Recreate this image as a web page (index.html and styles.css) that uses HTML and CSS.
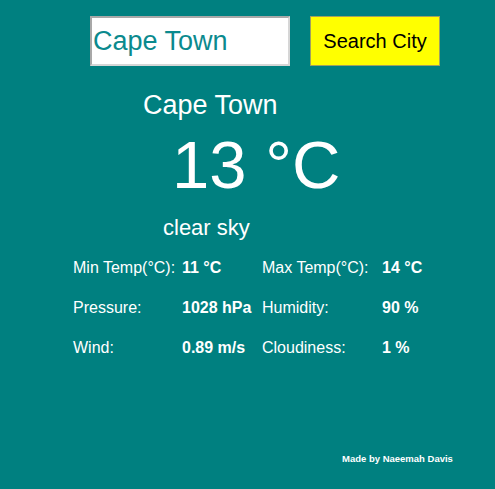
FILE: index.html
```html
<!DOCTYPE html>
<html>
<head>
<meta charset="utf-8">
<link rel="stylesheet" href="styles.css">
</head>
<body>
<div class="app">
  <form class="search">
    <input class="city-input" type="text" value="Cape Town">
    <button class="search-btn" type="button">Search City</button>
  </form>
  <h1 class="city">Cape Town</h1>
  <div class="temp">13 °C</div>
  <div class="desc">clear sky</div>
  <div class="details">
    <span class="label">Min Temp(°C):</span><span class="value">11 °C</span>
    <span class="label">Max Temp(°C):</span><span class="value">14 °C</span>
    <span class="label">Pressure:</span><span class="value">1028 hPa</span>
    <span class="label">Humidity:</span><span class="value">90 %</span>
    <span class="label">Wind:</span><span class="value">0.89 m/s</span>
    <span class="label">Cloudiness:</span><span class="value">1 %</span>
  </div>
  <footer class="footer">Made by Naeemah Davis</footer>
</div>
</body>
</html>
```
FILE: styles.css
```css
html, body {
  margin: 0;
  padding: 0;
  background: #008080;
  font-family: "Liberation Sans", Arial, sans-serif;
  color: #ffffff;
}
.app {
  display: flex;
  flex-direction: column;
  align-items: flex-start;
  padding-top: 16px;
  height: 489px;
  box-sizing: border-box;
}
.search {
  display: flex;
  gap: 20px;
  margin: 0 0 0 90px;
}
.city-input {
  width: 200px;
  height: 50px;
  box-sizing: border-box;
  border: 2px solid #d0d0d0;
  border-color: #a8a8a8 #d6d6d6 #d6d6d6 #a8a8a8;
  background: #ffffff;
  color: #0b8a8e;
  font-family: "Liberation Sans", Arial, sans-serif;
  font-size: 27px;
  padding: 0 1px;
  margin: 0;
  outline: none;
}
.search-btn {
  width: 130px;
  height: 50px;
  box-sizing: border-box;
  background: #ffff00;
  border: 1px solid #a0a060;
  color: #000000;
  font-family: "Liberation Sans", Arial, sans-serif;
  font-size: 20px;
  padding: 0;
  margin: 0;
}
.city {
  margin: 26px 0 0 143px;
  font-size: 27px;
  font-weight: normal;
  line-height: 1;
}
.temp {
  margin: 12px 0 0 172px;
  font-size: 67px;
  line-height: 1;
}
.desc {
  margin: 19px 0 0 163px;
  font-size: 22px;
  line-height: 1;
}
.details {
  display: grid;
  grid-template-columns: 109px 80px 120px auto;
  row-gap: 24px;
  margin: 21px 0 0 73px;
  font-size: 16px;
  line-height: 1;
}
.value {
  font-weight: bold;
}
.footer {
  margin: 98px 0 0 342px;
  font-size: 9.5px;
  font-weight: bold;
  line-height: 1;
}
```
